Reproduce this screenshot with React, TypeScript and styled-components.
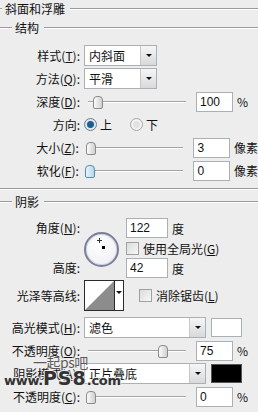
import React from "react";
import styled, { createGlobalStyle } from "styled-components";

const GlobalStyle = createGlobalStyle`
  html, body { margin: 0; padding: 0; background: #ededed; }
  body {
    font-family: "Noto Sans CJK SC", "Liberation Sans", sans-serif;
    font-size: 12px;
    color: #111;
  }
`;

const Panel = styled.div`
  position: relative;
  width: 258px;
  height: 412px;
  overflow: hidden;
  background: #ededed;
  display: flex;
  flex-direction: column;
`;

const Legend = styled.div<{ $top: number; $indent: number }>`
  display: flex;
  align-items: center;
  height: 12px;
  line-height: 12px;
  margin-top: ${(p) => p.$top}px;
  white-space: nowrap;
  &::before,
  &::after {
    content: "";
    height: 0;
    border-top: 1px solid #9a9a9a;
    border-bottom: 1px solid #ffffff;
  }
  &::before {
    width: ${(p) => p.$indent}px;
    margin-right: 3px;
  }
  &::after {
    flex: 1;
    margin-left: 5px;
  }
`;

const Separator = styled.div<{ $top: number }>`
  margin-top: ${(p) => p.$top}px;
  border-top: 1px solid #9a9a9a;
  border-bottom: 1px solid #ffffff;
`;

const Rows = styled.div<{ $top: number }>`
  display: flex;
  flex-direction: column;
  margin-top: ${(p) => p.$top}px;
`;

const Row = styled.div<{ $h?: number }>`
  display: flex;
  align-items: center;
  height: ${(p) => p.$h ?? 23}px;
`;

const Label = styled.div`
  width: 80px;
  padding-right: 2px;
  margin-right: 2px;
  text-align: right;
  white-space: nowrap;
  line-height: 14px;
  u { text-decoration: underline; text-underline-offset: 1px; }
`;

const SelectBox = styled.div<{ $w: number }>`
  display: flex;
  width: ${(p) => p.$w}px;
  height: 21px;
  box-sizing: border-box;
  border: 1px solid #a9b0b8;
  background: #fff;
`;

const SelectText = styled.div`
  flex: 1;
  padding-left: 4px;
  line-height: 19px;
  white-space: nowrap;
  overflow: hidden;
`;

const DropButton = styled.div`
  width: 15px;
  border-left: 1px solid #c4c8cc;
  background: linear-gradient(#f6f6f6, #d9d9d9);
  display: flex;
  align-items: center;
  justify-content: center;
  &::after {
    content: "";
    border-left: 3px solid transparent;
    border-right: 3px solid transparent;
    border-top: 3px solid #111;
  }
`;

const SliderWrap = styled.div`
  position: relative;
  width: 106px;
  height: 14px;
  margin-right: 6px;
`;

const Track = styled.div`
  position: absolute;
  left: 4px;
  right: 4px;
  top: 6px;
  border-top: 1px solid #a3a3a3;
  border-bottom: 1px solid #ffffff;
`;

const Thumb = styled.div<{ $active?: boolean }>`
  position: absolute;
  top: 1px;
  width: 8px;
  height: 11px;
  border: 1px solid ${(p) => (p.$active ? "#5d8bb0" : "#8a8a8a")};
  border-radius: 4px 4px 2px 2px;
  background: ${(p) =>
    p.$active
      ? "linear-gradient(90deg, #e8f4fb, #b4d8ee)"
      : "linear-gradient(90deg, #fbfbfb, #d0d0d0)"};
`;

const NumInput = styled.div<{ $w?: number }>`
  width: ${(p) => p.$w ?? 37}px;
  height: 20px;
  box-sizing: border-box;
  border: 1px solid #a9b0b8;
  background: #fff;
  padding-left: 3px;
  font-family: "Liberation Sans", Arial, sans-serif;
  font-size: 12px;
  line-height: 18px;
`;

const Unit = styled.span`
  margin-left: 4px;
  white-space: nowrap;
`;

const Radio = styled.div<{ $on?: boolean }>`
  width: 11px;
  height: 11px;
  border-radius: 50%;
  border: 1px solid ${(p) => (p.$on ? "#6b7f91" : "#a6a6a6")};
  background: ${(p) =>
    p.$on
      ? "radial-gradient(circle, #1e5e8f 0 3px, #5aa0cc 3.5px, #dfe6ec 4px)"
      : "radial-gradient(circle, #e2e2e2 0 3px, #f2f2f2 4px)"};
  margin-right: 3px;
`;

const RadioText = styled.span<{ $gap?: number }>`
  margin-right: ${(p) => p.$gap ?? 0}px;
`;

const Check = styled.div`
  width: 11px;
  height: 11px;
  border: 1px solid #a0a0a0;
  background: linear-gradient(135deg, #dcdcdc, #f7f7f7);
  margin-right: 4px;
`;

const AngleGrid = styled.div`
  display: grid;
  grid-template-columns: 82px 44px 1fr;
  grid-template-rows: 20px 20px 20px;
  margin-top: 10px;
  align-items: center;
`;

const GridLabel = styled(Label)<{ $row: number }>`
  grid-column: 1;
  grid-row: ${(p) => p.$row};
`;

const Dial = styled.div`
  position: relative;
  grid-column: 2;
  grid-row: 1 / 4;
  align-self: start;
  margin: 14px 0 0 2px;
  width: 31px;
  height: 31px;
  border-radius: 50%;
  border: 2px solid #7b7e9c;
  background: radial-gradient(circle at 40% 35%, #ffffff, #ececf2);
  box-shadow: inset 0 0 0 1px #d4d6e2;
`;

const Cross = styled.div`
  position: absolute;
  left: 11px;
  top: 4px;
  width: 5px;
  height: 5px;
  &::before,
  &::after {
    content: "";
    position: absolute;
    background: #333;
  }
  &::before { left: 2px; top: 0; width: 1px; height: 5px; }
  &::after { left: 0; top: 2px; width: 5px; height: 1px; }
`;

const Dot = styled.div`
  position: absolute;
  left: 16px;
  top: 12px;
  width: 3px;
  height: 3px;
  background: #000;
`;

const Cell = styled.div<{ $row: number }>`
  grid-column: 3;
  grid-row: ${(p) => p.$row};
  display: flex;
  align-items: center;
`;

const ContourBox = styled.div`
  display: flex;
  width: 40px;
  height: 31px;
  box-sizing: border-box;
  border: 1px solid #2a2a2a;
  background: #fff;
  margin-right: 15px;
`;

const ContourArrow = styled.div`
  width: 9px;
  border-left: 1px solid #2a2a2a;
  display: flex;
  justify-content: center;
  padding-top: 10px;
  box-sizing: border-box;
  &::after {
    content: "";
    height: 0;
    border-left: 3px solid transparent;
    border-right: 3px solid transparent;
    border-top: 3px solid #111;
  }
`;

const Swatch = styled.div<{ $color: string }>`
  width: 31px;
  height: 19px;
  box-sizing: border-box;
  margin-left: 5px;
  border: 1px solid ${(p) => (p.$color === "#fff" ? "#a9b0b8" : "#555")};
  background: ${(p) => p.$color};
`;

const Watermark = styled.div`
  position: absolute;
  left: 4px;
  top: 355px;
  pointer-events: none;
  line-height: 1;
`;

const MarkTop = styled.div`
  margin-left: 29px;
  color: #5a5a5a;
  font-size: 14px;
  letter-spacing: -0.5px;
  text-shadow: 0 0 1px #fff;
`;

const MarkBottom = styled.div`
  display: flex;
  align-items: baseline;
  margin-top: 0;
  color: #333;
  font-family: "DejaVu Sans", sans-serif;
  font-weight: bold;
  text-shadow: 1px 0 0 #ededed, -1px 0 0 #ededed, 0 1px 0 #ededed, 0 -1px 0 #ededed;
`;

const MarkSmall = styled.span`
  font-size: 13px;
  letter-spacing: -0.3px;
`;

const MarkBig = styled.span`
  font-size: 19px;
  letter-spacing: 1px;
`;

function Slider({ pos, active }: { pos: number; active?: boolean }) {
  return (
    <SliderWrap>
      <Track />
      <Thumb $active={active} style={{ left: pos }} />
    </SliderWrap>
  );
}

function Select({ w, text }: { w: number; text: string }) {
  return (
    <SelectBox $w={w}>
      <SelectText>{text}</SelectText>
      <DropButton />
    </SelectBox>
  );
}

export default function App() {
  return (
    <Panel>
      <GlobalStyle />
      <Legend $top={3} $indent={2}>斜面和浮雕</Legend>
      <Legend $top={7} $indent={12}>结构</Legend>
      <Rows $top={10}>
        <Row>
          <Label>样式(<u>T</u>):</Label>
          <Select w={73} text="内斜面" />
        </Row>
        <Row>
          <Label>方法(<u>Q</u>):</Label>
          <Select w={73} text="平滑" />
        </Row>
        <Row>
          <Label>深度(<u>D</u>):</Label>
          <Slider pos={9} />
          <NumInput>100</NumInput>
          <Unit>%</Unit>
        </Row>
        <Row>
          <Label>方向:</Label>
          <Radio $on />
          <RadioText $gap={18}>上</RadioText>
          <Radio />
          <RadioText>下</RadioText>
        </Row>
        <Row>
          <Label>大小(<u>Z</u>):</Label>
          <Slider pos={3} />
          <NumInput>3</NumInput>
          <Unit>像素</Unit>
        </Row>
        <Row>
          <Label>软化(<u>F</u>):</Label>
          <Slider pos={2} active />
          <NumInput>0</NumInput>
          <Unit>像素</Unit>
        </Row>
      </Rows>
      <Separator $top={6} />
      <Legend $top={6} $indent={12}>阴影</Legend>
      <AngleGrid>
        <GridLabel $row={1}>角度(<u>N</u>):</GridLabel>
        <GridLabel $row={3}>高度:</GridLabel>
        <Dial>
          <Cross />
          <Dot />
        </Dial>
        <Cell $row={1}>
          <NumInput $w={42}>122</NumInput>
          <Unit>度</Unit>
        </Cell>
        <Cell $row={2}>
          <Check />
          <span>使用全局光(<u>G</u>)</span>
        </Cell>
        <Cell $row={3}>
          <NumInput $w={42}>42</NumInput>
          <Unit>度</Unit>
        </Cell>
      </AngleGrid>
      <Rows $top={2}>
        <Row $h={31}>
          <Label>光泽等高线:</Label>
          <ContourBox>
            <svg width="29" height="29" viewBox="0 0 29 29">
              <polygon points="0,29 29,0 29,29" fill="#8c8c8c" />
            </svg>
            <ContourArrow />
          </ContourBox>
          <Check />
          <span>消除锯齿(<u>L</u>)</span>
        </Row>
      </Rows>
      <Rows $top={5}>
        <Row>
          <Label>高光模式(<u>H</u>):</Label>
          <Select w={122} text="滤色" />
          <Swatch $color="#fff" />
        </Row>
        <Row>
          <Label>不透明度(<u>O</u>):</Label>
          <Slider pos={74} />
          <NumInput>75</NumInput>
          <Unit>%</Unit>
        </Row>
        <Row>
          <Label>阴影模式(<u>A</u>):</Label>
          <Select w={122} text="正片叠底" />
          <Swatch $color="#000" />
        </Row>
        <Row>
          <Label>不透明度(<u>C</u>):</Label>
          <Slider pos={2} />
          <NumInput>0</NumInput>
          <Unit>%</Unit>
        </Row>
      </Rows>
      <Watermark>
        <MarkTop>一起ps吧</MarkTop>
        <MarkBottom>
          <MarkSmall>www.</MarkSmall>
          <MarkBig>PS8</MarkBig>
          <MarkSmall>.com</MarkSmall>
        </MarkBottom>
      </Watermark>
    </Panel>
  );
}
